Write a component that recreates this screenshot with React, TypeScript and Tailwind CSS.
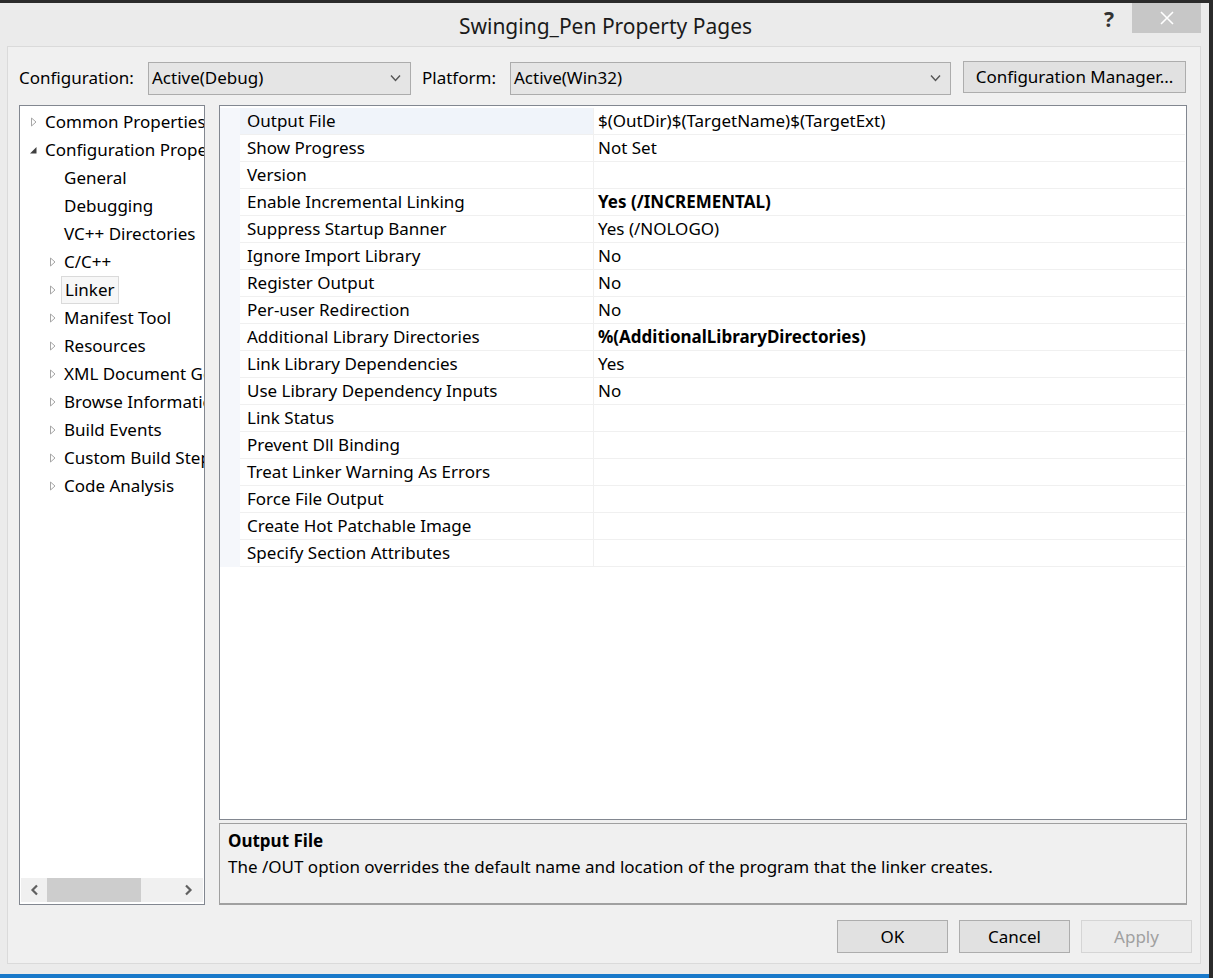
import React from 'react';

const font = { fontFamily: '"Segoe UI", "Noto Sans", sans-serif' };

type TreeItem = { label: string; level: 0 | 1; arrow: 'none' | 'closed' | 'open'; selected?: boolean };

const tree: TreeItem[] = [
  { label: 'Common Properties', level: 0, arrow: 'closed' },
  { label: 'Configuration Properties', level: 0, arrow: 'open' },
  { label: 'General', level: 1, arrow: 'none' },
  { label: 'Debugging', level: 1, arrow: 'none' },
  { label: 'VC++ Directories', level: 1, arrow: 'none' },
  { label: 'C/C++', level: 1, arrow: 'closed' },
  { label: 'Linker', level: 1, arrow: 'closed', selected: true },
  { label: 'Manifest Tool', level: 1, arrow: 'closed' },
  { label: 'Resources', level: 1, arrow: 'closed' },
  { label: 'XML Document Generator', level: 1, arrow: 'closed' },
  { label: 'Browse Information', level: 1, arrow: 'closed' },
  { label: 'Build Events', level: 1, arrow: 'closed' },
  { label: 'Custom Build Step', level: 1, arrow: 'closed' },
  { label: 'Code Analysis', level: 1, arrow: 'closed' },
];

const rows: { name: string; value: string; bold?: boolean }[] = [
  { name: 'Output File', value: '$(OutDir)$(TargetName)$(TargetExt)' },
  { name: 'Show Progress', value: 'Not Set' },
  { name: 'Version', value: '' },
  { name: 'Enable Incremental Linking', value: 'Yes (/INCREMENTAL)', bold: true },
  { name: 'Suppress Startup Banner', value: 'Yes (/NOLOGO)' },
  { name: 'Ignore Import Library', value: 'No' },
  { name: 'Register Output', value: 'No' },
  { name: 'Per-user Redirection', value: 'No' },
  { name: 'Additional Library Directories', value: '%(AdditionalLibraryDirectories)', bold: true },
  { name: 'Link Library Dependencies', value: 'Yes' },
  { name: 'Use Library Dependency Inputs', value: 'No' },
  { name: 'Link Status', value: '' },
  { name: 'Prevent Dll Binding', value: '' },
  { name: 'Treat Linker Warning As Errors', value: '' },
  { name: 'Force File Output', value: '' },
  { name: 'Create Hot Patchable Image', value: '' },
  { name: 'Specify Section Attributes', value: '' },
];

const Arrow = ({ kind }: { kind: TreeItem['arrow'] }) => {
  if (kind === 'none') return <span className="w-[9px] shrink-0" />;
  if (kind === 'open')
    return (
      <svg width="9" height="10" viewBox="0 0 9 10" className="shrink-0">
        <path d="M7.5 2 L7.5 8.5 L1 8.5 Z" fill="#404040" />
      </svg>
    );
  return (
    <svg width="9" height="10" viewBox="0 0 9 10" className="shrink-0">
      <path d="M2.5 1 L7 5 L2.5 9 Z" fill="none" stroke="#a6a6a6" strokeWidth="1" />
    </svg>
  );
};

const Chevron = () => (
  <svg width="11" height="8" viewBox="0 0 11 8">
    <path d="M1 1.5 L5.5 6.5 L10 1.5" fill="none" stroke="#555" strokeWidth="1.4" />
  </svg>
);

const Combo = ({ text, width }: { text: string; width: string }) => (
  <div className={`${width} h-[33px] flex items-center justify-between pl-[3px] pr-[9px] bg-[#e5e5e5] border border-[#acacac]`}>
    <span className="text-[17px] text-black">{text}</span>
    <Chevron />
  </div>
);

const Button = ({ label, disabled }: { label: string; disabled?: boolean }) => (
  <div
    className={`w-[111px] h-[33px] flex items-center justify-center text-[17px] border ${
      disabled ? 'border-[#d5d5d5] bg-[#ececec] text-[#a0a0a0]' : 'border-[#adadad] bg-[#e1e1e1] text-black'
    }`}
  >
    {label}
  </div>
);

export default function App() {
  return (
    <div className="w-[1213px] h-[978px] bg-[#2b2b2b] overflow-hidden" style={font}>
      <div className="w-[1209px] h-[971px] mt-[3px] bg-[#ebebeb] flex flex-col">
        {/* title bar */}
        <div className="h-[43px] flex items-start relative">
          <div className="flex-1 h-full flex items-center justify-center text-[21px] text-[#1a1a1a] pl-[2px] pt-[4px]">
            Swinging_Pen Property Pages
          </div>
          <span className="absolute left-[1104px] top-[1px] text-[21px] font-bold text-[#333]">?</span>
          <div className="absolute left-[1132px] top-0 w-[69px] h-[30px] bg-[#c7c7c7] flex items-center justify-center">
            <svg width="14" height="14" viewBox="0 0 14 14">
              <path d="M1 1 L13 13 M13 1 L1 13" stroke="#fff" strokeWidth="1.6" />
            </svg>
          </div>
        </div>

        {/* client area */}
        <div className="ml-[7px] w-[1194px] h-[918px] border border-[#dadada] bg-[#f0f0f0] flex flex-col pl-[11px] pt-[14px]">
          <div className="flex items-center h-[34px]">
            <span className="text-[17px] text-black w-[129px]">Configuration:</span>
            <Combo text="Active(Debug)" width="w-[263px]" />
            <span className="text-[17px] text-black ml-[11px] w-[88px]">Platform:</span>
            <Combo text="Active(Win32)" width="w-[441px]" />
            <div className="ml-[12px] w-[223px] h-[32px] -mt-[2px] flex items-center justify-center bg-[#e1e1e1] border border-[#adadad] text-[17px] text-black">
              Configuration Manager...
            </div>
          </div>

          <div className="flex mt-[10px] gap-[14px]">
            {/* tree */}
            <div className="w-[186px] h-[800px] border border-[#828790] bg-white flex flex-col">
              <div className="flex-1 pt-[2px] overflow-hidden">
                {tree.map(t => (
                  <div
                    key={t.label}
                    className={`h-[28px] flex items-center whitespace-nowrap ${t.level === 0 ? 'pl-[9px]' : 'pl-[28px]'}`}
                  >
                    <Arrow kind={t.arrow} />
                    <span
                      className={`text-[17px] text-black ml-[4px] h-[28px] flex items-center px-[3px] ${
                        t.selected ? 'border border-[#dadada] bg-[#f7f7f7]' : ''
                      }`}
                    >
                      {t.label}
                    </span>
                  </div>
                ))}
              </div>
              <div className="h-[24px] mx-[1px] mb-[2px] bg-[#f0f0f0] flex items-center">
                <div className="w-[26px] flex justify-center">
                  <svg width="9" height="12" viewBox="0 0 9 12">
                    <path d="M7 1.5 L2.5 6 L7 10.5" fill="none" stroke="#606060" strokeWidth="2.2" />
                  </svg>
                </div>
                <div className="w-[94px] h-full bg-[#cdcdcd]" />
                <div className="flex-1 flex justify-end pr-[10px]">
                  <svg width="9" height="12" viewBox="0 0 9 12">
                    <path d="M2 1.5 L6.5 6 L2 10.5" fill="none" stroke="#606060" strokeWidth="2.2" />
                  </svg>
                </div>
              </div>
            </div>

            {/* grid + description */}
            <div className="flex flex-col w-[968px]">
              <div className="h-[715px] border border-[#828790] bg-white pt-[2px] pr-[1px]">
                <div className="flex">
                  <div className="w-[20px] bg-[#f5f7fb]" />
                  <div className="flex-1">
                    {rows.map((r, i) => (
                      <div key={r.name} className="h-[27px] flex border-b border-[#f0f0f0]">
                        <div
                          className={`w-[354px] pl-[7px] flex items-center text-[17px] text-black border-r border-[#f0f0f0] ${
                            i === 0 ? 'bg-[#f0f4fa]' : ''
                          }`}
                        >
                          {r.name}
                        </div>
                        <div className={`flex-1 pl-[4px] flex items-center text-[17px] text-black ${r.bold ? 'font-bold' : ''}`}>
                          {r.value}
                        </div>
                      </div>
                    ))}
                  </div>
                </div>
              </div>
              <div className="mt-[3px] h-[82px] border border-b-2 border-[#a0a0a0] bg-[#f0f0f0] pl-[8px] pt-[5px]">
                <div className="text-[17px] font-bold text-black leading-[24px]">Output File</div>
                <div className="text-[17px] text-black leading-[27px]">
                  The /OUT option overrides the default name and location of the program that the linker creates.
                </div>
              </div>
            </div>
          </div>

          <div className="flex gap-[11px] mt-[15px] ml-[818px]">
            <Button label="OK" />
            <Button label="Cancel" />
            <Button label="Apply" disabled />
          </div>
        </div>
      </div>
      <div className="w-[1209px] h-[4px] bg-[#1979ca]" />
    </div>
  );
}
